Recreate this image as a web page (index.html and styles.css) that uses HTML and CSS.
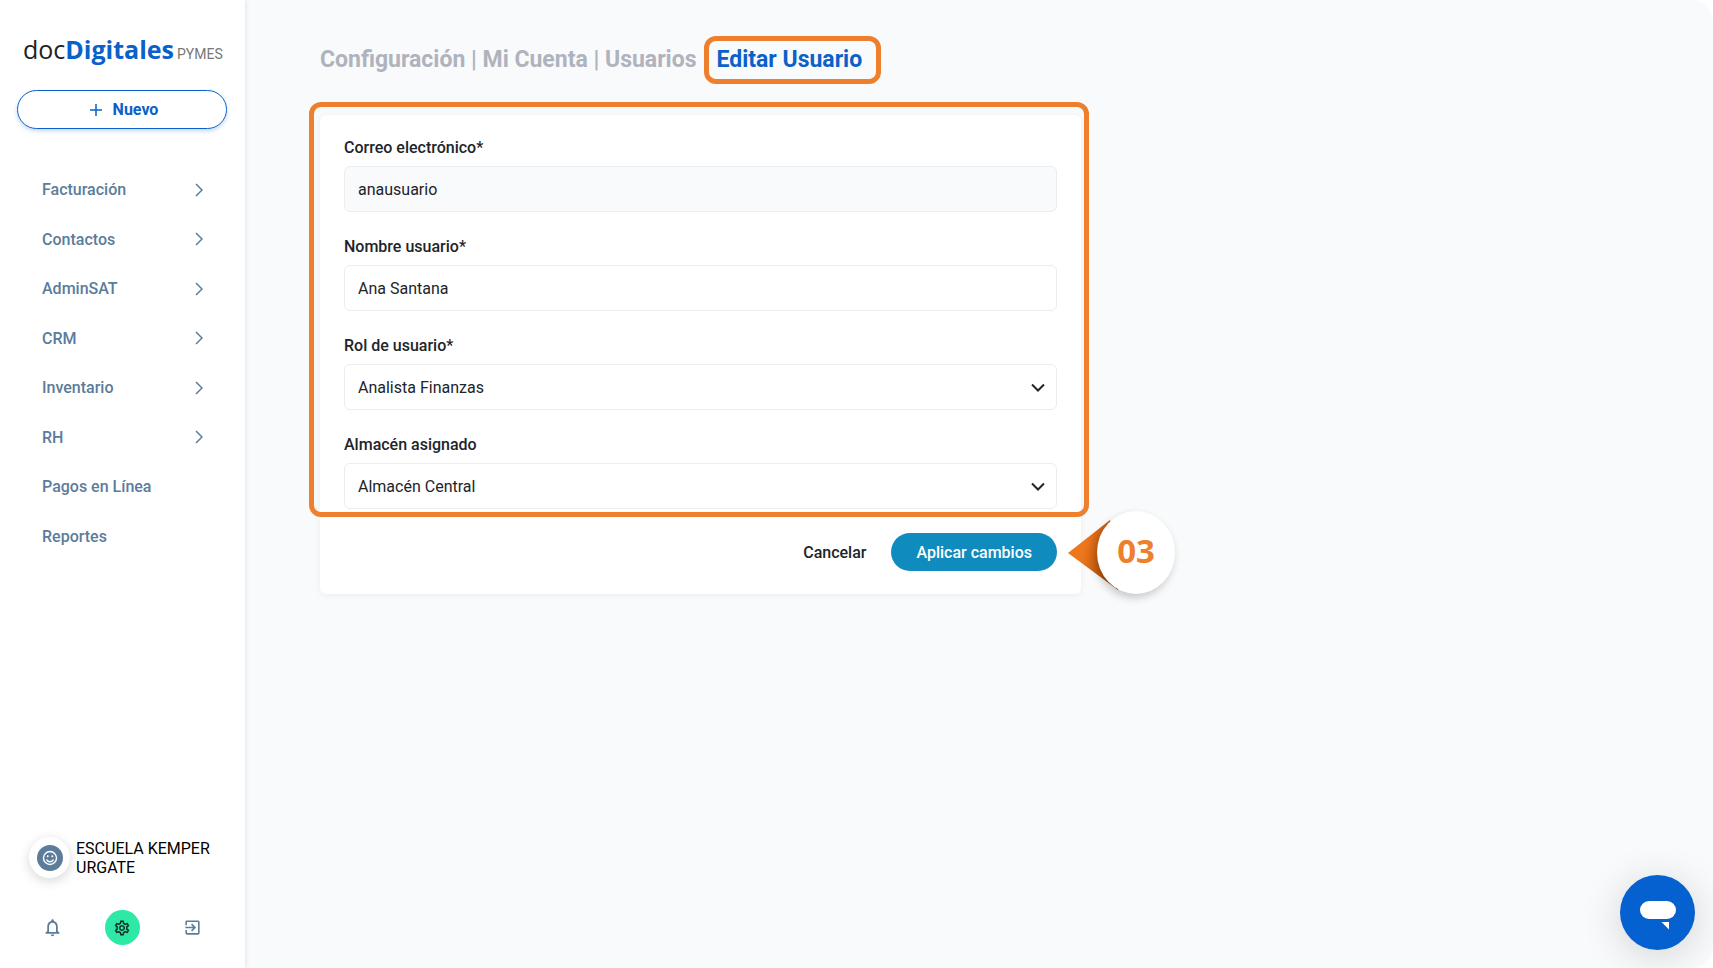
FILE: index.html
```html
<!DOCTYPE html>
<html lang="es">
<head>
	<meta charset="utf-8">
	<title>Editar Usuario - docDigitales</title>
	<meta name="viewport" content="width=device-width, initial-scale=1">
	<link rel="stylesheet" href="styles.css">
</head>

<body>
	<!-- Sidebar -->
	<aside class="sidebar">
		<a class="logo" href="#"><span class="logo-doc">doc</span><span class="logo-digitales">Digitales</span><span class="logo-pymes">PYMES</span></a>

		<button type="button" class="btn-new">
			<svg width="12" height="12" viewBox="0 0 12 12"><path d="M6 0V12M0 6H12" /></svg>
			Nuevo
		</button>

		<nav class="menu">
			<a href="#">Facturación <svg class="arrow" viewBox="0 0 8 14"><path d="M1 1l6 6-6 6" /></svg></a>
			<a href="#">Contactos <svg class="arrow" viewBox="0 0 8 14"><path d="M1 1l6 6-6 6" /></svg></a>
			<a href="#">AdminSAT <svg class="arrow" viewBox="0 0 8 14"><path d="M1 1l6 6-6 6" /></svg></a>
			<a href="#">CRM <svg class="arrow" viewBox="0 0 8 14"><path d="M1 1l6 6-6 6" /></svg></a>
			<a href="#">Inventario <svg class="arrow" viewBox="0 0 8 14"><path d="M1 1l6 6-6 6" /></svg></a>
			<a href="#">RH <svg class="arrow" viewBox="0 0 8 14"><path d="M1 1l6 6-6 6" /></svg></a>
			<a href="#">Pagos en Línea</a>
			<a href="#">Reportes</a>
		</nav>

		<div class="account">
			<span class="avatar">
				<svg width="26" height="26" viewBox="0 0 26 26">
					<circle cx="13" cy="13" r="13" fill="#5b7c9b" />
					<circle cx="13" cy="13" r="6.500" fill="none" stroke="#fff" stroke-width="1.400" />
					<circle cx="10.700" cy="11.300" r="1" fill="#fff" />
					<circle cx="15.300" cy="11.300" r="1" fill="#fff" />
					<path d="M9.500 14.500c1.300 3 5.700 3 7 0" fill="none" stroke="#fff" stroke-width="1.400" />
				</svg>
			</span>
			<span class="account-name">ESCUELA KEMPER URGATE</span>
		</div>

		<div class="tools">
			<button type="button" class="tool" aria-label="Notificaciones">
				<svg width="21" height="21" viewBox="0 0 24 24"><path d="M12 22c1.100 0 2-.9 2-2h-4c0 1.100.9 2 2 2zm6-6v-5c0-3.070-1.630-5.640-4.500-6.320V4c0-.83-.67-1.500-1.500-1.500s-1.500.67-1.500 1.500v.68C7.640 5.360 6 7.920 6 11v5l-2 2v1h16v-1l-2-2zm-2 1H8v-6c0-2.480 1.510-4.500 4-4.500s4 2.020 4 4.500v6z" /></svg>
			</button>
			<button type="button" class="tool tool-active" aria-label="Configuración">
				<svg width="18" height="18" viewBox="0 0 24 24"><path d="M19.430 12.980c.04-.32.07-.64.07-.98s-.03-.66-.07-.98l2.110-1.650c.19-.15.24-.42.12-.64l-2-3.460c-.12-.22-.39-.3-.61-.22l-2.490 1c-.52-.4-1.080-.73-1.690-.98l-.38-2.650C14.460 2.180 14.250 2 14 2h-4c-.25 0-.46.18-.49.42l-.38 2.650c-.61.25-1.170.59-1.690.98l-2.490-1c-.23-.09-.49 0-.61.22l-2 3.460c-.13.22-.07.49.12.64l2.110 1.650c-.04.32-.07.65-.07.98s.03.66.07.98l-2.110 1.650c-.19.15-.24.42-.12.64l2 3.460c.12.22.39.3.61.22l2.490-1c.52.4 1.080.73 1.690.98l.38 2.650c.03.24.24.42.49.42h4c.25 0 .46-.18.49-.42l.38-2.650c.61-.25 1.170-.59 1.690-.98l2.490 1c.23.09.49 0 .61-.22l2-3.460c.12-.22.07-.49-.12-.64l-2.110-1.650zm-1.980-1.710c.04.31.05.52.05.73s-.02.43-.05.73l-.14 1.130.89.7 1.080.84-.7 1.210-1.270-.51-1.040-.42-.9.68c-.43.32-.84.56-1.250.73l-1.060.43-.16 1.130-.2 1.350h-1.400l-.35-2.480-1.060-.43c-.43-.18-.83-.41-1.230-.71l-.91-.7-1.060.43-1.270.51-.7-1.210 1.970-1.540-.14-1.130c-.03-.31-.05-.54-.05-.74s.02-.43.05-.73l.14-1.130-1.970-1.540.7-1.210 2.310.94.9-.68c.43-.32.84-.56 1.250-.73l1.060-.43.36-2.480h1.390l.35 2.480 1.060.43c.43.18.83.41 1.230.71l.91.7 2.330-.94.7 1.210-1.960 1.550.14 1.120zM12 8c-2.210 0-4 1.790-4 4s1.790 4 4 4 4-1.790 4-4-1.790-4-4-4zm0 6c-1.100 0-2-.9-2-2s.9-2 2-2 2 .9 2 2-.9 2-2 2z" /></svg>
			</button>
			<button type="button" class="tool" aria-label="Salir">
				<svg width="19" height="19" viewBox="0 0 24 24"><path d="M10.090 15.590L11.500 17l5-5-5-5-1.410 1.410L12.670 11H3v2h9.670l-2.580 2.590zM19 3H5c-1.110 0-2 .9-2 2v4h2V5h14v14H5v-4H3v4c0 1.100.89 2 2 2h14c1.100 0 2-.9 2-2V5c0-1.100-.9-2-2-2z" /></svg>
			</button>
		</div>
	</aside>

	<!-- Main content -->
	<main class="content">
		<h1 class="breadcrumb">
			<span>Configuración | Mi Cuenta | Usuarios</span>
			<span class="current">Editar Usuario</span>
		</h1>

		<form class="card">
			<div class="highlight"></div>
			<div class="field">
				<label for="correo">Correo electrónico*</label>
				<input type="text" id="correo" value="anausuario" readonly>
			</div>
			<div class="field">
				<label for="nombre">Nombre usuario*</label>
				<input type="text" id="nombre" value="Ana Santana">
			</div>
			<div class="field">
				<label for="rol">Rol de usuario*</label>
				<div class="select">
					<select id="rol"><option>Analista Finanzas</option></select>
					<svg viewBox="0 0 14 9"><path d="M1 1.500l6 6 6-6" /></svg>
				</div>
			</div>
			<div class="field">
				<label for="almacen">Almacén asignado</label>
				<div class="select">
					<select id="almacen"><option>Almacén Central</option></select>
					<svg viewBox="0 0 14 9"><path d="M1 1.500l6 6 6-6" /></svg>
				</div>
			</div>
			<div class="actions">
				<button type="button" class="btn-cancel">Cancelar</button>
				<button type="button" class="btn-apply">Aplicar cambios</button>
			</div>

			<!-- Step marker -->
			<div class="step">
				<svg class="step-tip" viewBox="0 0 50 70">
					<defs>
						<linearGradient id="tip" x1="0" y1="0" x2="1" y2="0.300">
							<stop offset="0.400" stop-color="#ee761c" />
							<stop offset="1" stop-color="#a84a08" />
						</linearGradient>
					</defs>
					<path d="M0 33L42 0L50 35V70Z" fill="url(#tip)" />
				</svg>
				<span class="step-number">03</span>
			</div>
		</form>
	</main>

	<!-- Chat -->
	<button type="button" class="chat" aria-label="Abrir chat">
		<svg width="36" height="30" viewBox="0 0 36 30"><rect width="36" height="18" rx="9" /><path d="M21.500 21h7.500v7.500z" /></svg>
	</button>
</body>
</html>
```
FILE: styles.css
```css
* {
  box-sizing: border-box;
}

body {
  margin: 0;
  display: flex;
  min-height: 100vh;
  background-color: #fff;
  font-family: Roboto, "Liberation Sans", sans-serif;
  font-size: 16px;
  color: #212429;
}

button, input, select {
  font: inherit;
  color: inherit;
}

button {
  border: none;
  background: none;
  padding: 0;
  cursor: pointer;
}

a {
  text-decoration: none;
}

/* Sidebar */
.sidebar {
  position: relative;
  display: flex;
  flex-direction: column;
  flex: none;
  width: 245px;
  padding: 28px 18px 23px 17px;
  background-color: #fff;
  box-shadow: 0 0 5px rgba(0,0,0,0.12);
}

.logo {
  display: flex;
  align-items: baseline;
  height: 62px;
  padding-left: 6px;
  font-family: "Open Sans", "Noto Sans", sans-serif;
  font-size: 25px;
  line-height: 42px;
}
.logo-doc {
  color: #222;
}
.logo-digitales {
  font-weight: bold;
  color: #0a61c9;
}
.logo-pymes {
  padding-left: 3px;
  font-family: Roboto, sans-serif;
  font-size: 14px;
  color: #777;
}

.btn-new {
  display: flex;
  align-items: center;
  justify-content: center;
  gap: 11px;
  height: 39px;
  padding-left: 4px;
  border: 1px solid #0a61c9;
  border-radius: 20px;
  box-shadow: 0 2px 4px rgba(10,97,201,0.25);
  font-weight: bold;
  color: #0a61c9;
}
.btn-new svg {
  fill: none;
  stroke: #0a61c9;
  stroke-width: 1.5;
}

.menu {
  display: grid;
  grid-auto-rows: 1fr;
  height: 396px;
  margin-top: 36px;
  padding: 0 24px 0 25px;
}
.menu a {
  display: flex;
  align-items: center;
  justify-content: space-between;
  font-weight: 500;
  color: #5b7c9b;
}
.arrow {
  width: 8px;
  height: 14px;
  fill: none;
  stroke: #5b7c9b;
  stroke-width: 1.5;
}

.account {
  display: flex;
  align-items: center;
  gap: 6px;
  margin-top: auto;
  padding-left: 12px;
  line-height: 19px;
  color: #000;
}
.avatar {
  display: flex;
  align-items: center;
  justify-content: center;
  flex: none;
  width: 41px;
  height: 41px;
  border-radius: 50%;
  box-shadow: 0 3px 12px rgba(0,0,0,0.16);
}

.tools {
  display: flex;
  justify-content: space-between;
  margin-top: 32px;
}
.tool {
  display: flex;
  align-items: center;
  justify-content: center;
  width: 70px;
  height: 35px;
  fill: #5b7c9b;
}
.tool-active {
  width: 35px;
  border-radius: 50%;
  background-color: #2ee8a5;
  fill: #10312a;
}

/* Main content */
.content {
  flex: 1;
  padding: 36px 75px;
  border-radius: 0 22px 22px 0;
  background-color: #f9fafc;
}

.breadcrumb {
  display: flex;
  align-items: center;
  gap: 8px;
  margin: 0 0 31px;
  font-size: 23px;
  font-weight: bold;
  line-height: 38px;
  color: #aeb3bd;
}
.current {
  padding: 0 14px 0 7px;
  border: 5px solid #ee7f2d;
  border-radius: 12px;
  color: #0a61c9;
}

.card {
  position: relative;
  display: flex;
  flex-direction: column;
  gap: 24px;
  max-width: 761px;
  padding: 22px 24px 23px;
  border-radius: 6px;
  background-color: #fff;
  box-shadow: 0 1px 6px rgba(0,0,0,0.06);
}

/* Orange frame over the fields */
.highlight {
  position: absolute;
  top: -13px;
  left: -11px;
  right: -8px;
  bottom: 77px;
  border: 5px solid #ee7f2d;
  border-radius: 12px;
  pointer-events: none;
}

.field label {
  display: block;
  margin-bottom: 7px;
  font-weight: 500;
  line-height: 22px;
}
.field input,
.field select {
  display: block;
  width: 100%;
  height: 46px;
  padding: 0 13px;
  border: 1px solid #ebedef;
  border-radius: 6px;
  background-color: #fff;
  appearance: none;
}
.field input:read-only {
  background-color: #f9fafc;
}
.select {
  position: relative;
}
.select svg {
  position: absolute;
  top: 19px;
  right: 12px;
  width: 14px;
  height: 9px;
  fill: none;
  stroke: #212429;
  stroke-width: 2;
  pointer-events: none;
}

.actions {
  display: flex;
  justify-content: flex-end;
  gap: 25px;
  font-weight: 500;
}
.btn-apply {
  height: 38px;
  padding: 0 25px;
  border-radius: 19px;
  background-color: #108bbe;
  color: #fff;
}

/* Step marker */
.step {
  position: absolute;
  left: 748px;
  bottom: 0;
  display: flex;
}
.step-tip {
  width: 50px;
  height: 70px;
  margin: 9px -21px 0 0;
}
.step-number {
  position: relative;
  width: 78px;
  height: 83px;
  border-radius: 50%;
  background-color: #fff;
  box-shadow: -2px 4px 8px rgba(0,0,0,0.2);
  font-family: "Open Sans", sans-serif;
  font-size: 33px;
  font-weight: bold;
  line-height: 80px;
  text-align: center;
  color: #ee7f2d;
}

/* Chat button */
.chat {
  position: fixed;
  right: 18px;
  bottom: 18px;
  width: 75px;
  height: 75px;
  padding-top: 10px;
  border-radius: 50%;
  background-color: #0561cf;
  box-shadow: 0 6px 40px rgba(0,0,0,0.16);
  fill: #fff;
}
```
